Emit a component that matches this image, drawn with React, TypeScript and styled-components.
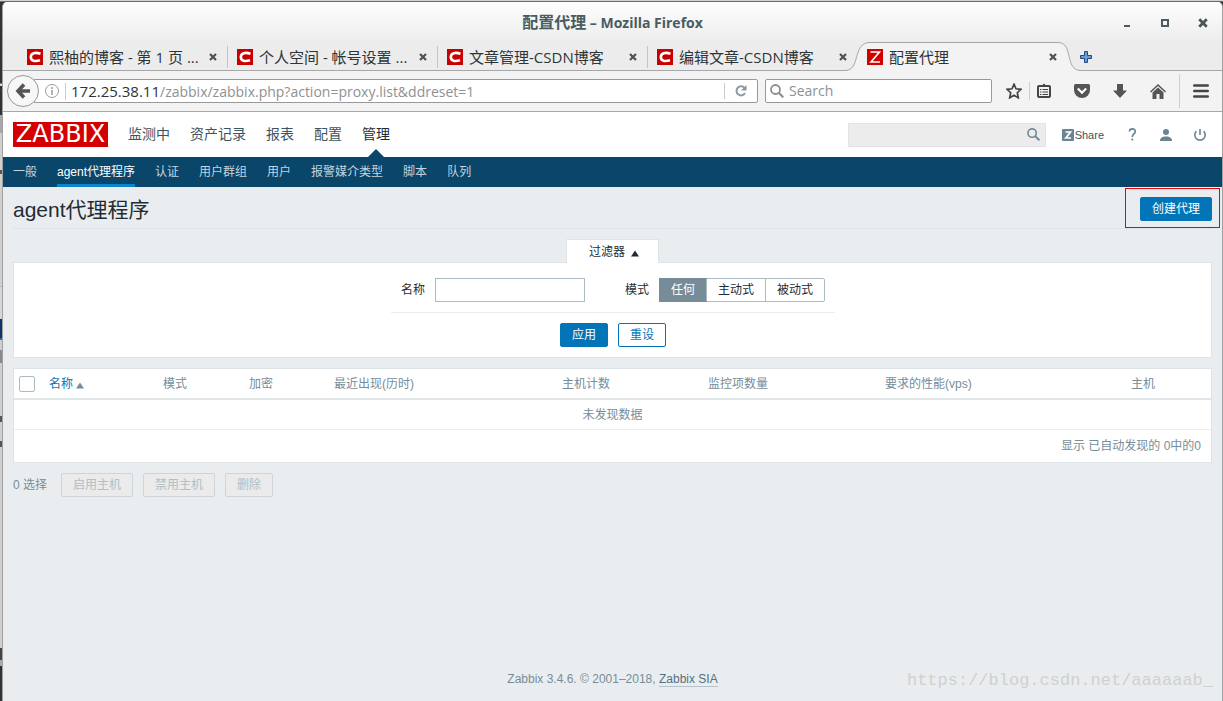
import React from "react";
import styled, { createGlobalStyle, css } from "styled-components";

const uiFont = '"Open Sans", "Noto Sans CJK SC", sans-serif';
const pageFont = '"Liberation Sans", "Noto Sans CJK SC", sans-serif';

const GlobalStyle = createGlobalStyle`
  *, *::before, *::after { box-sizing: border-box; }
  body { margin: 0; font-family: ${pageFont}; font-size: 12px; line-height: 18px; color: #1f2c33; }
  button, input { font: inherit; margin: 0; }
  button { padding: 0; border: 0; background: none; color: inherit; cursor: pointer; }
  a { color: inherit; text-decoration: none; }
  svg { display: block; flex: none; }
`;

/* Desktop and browser window */

const Desktop = styled.div`
  min-height: 100vh;
  display: flex;
  padding: 2px 0 0 2px;
  background: linear-gradient(#d4d4cf 0 1px, #6e706c 1px 2px, #2f3436 2px 83px, #d07030 83px 84px, #e0d8d0 84px 86px,
    #2f3436 86px 115px, #a8a8a8 115px 133px, #d0d0d0 133px 170px, #555 170px 174px, #d0d0d0 174px 286px,
    #bcbcbc 286px 287px, #d6d6d6 287px 319px, #12336a 319px 338px, #2a70b8 338px 340px, #d0d0d0 340px 350px,
    #8a8a8a 350px 363px, #d0d0d0 363px 416px, #555 416px 422px, #d0d0d0 422px 441px, #555 441px 447px,
    #d0d0d0 447px 648px, #444 648px 660px, #aaa 660px 666px, #303234 666px);
`;

const Window = styled.div`
  flex: 1;
  min-width: 0;
  display: flex;
  flex-direction: column;
  border: 1px solid #a0a0a0;
  border-top-color: #fbfbfb;
  border-bottom: 0;
  border-radius: 5px 5px 0 0;
  overflow: hidden;
  background: #e9edf0;
`;

const Chrome = styled.header`
  font-family: ${uiFont};
  background: linear-gradient(#fdfdfd, #ececec 40px, #ececec);
  color: #2e3436;
`;

const TitleBar = styled.div`
  display: grid;
  grid-template-columns: 1fr auto 1fr;
  align-items: center;
  height: 39px;
`;

const WindowTitle = styled.div`
  grid-column: 2;
  font-size: 14px;
  font-weight: 700;
  color: #4a5b61;
  span { font-size: 16px; }
`;

const WindowButtons = styled.div`
  display: flex;
  justify-content: flex-end;
  gap: 28px;
  padding-right: 14px;
  color: #4a5b61;
`;

const TabStrip = styled.div`
  display: flex;
  height: 29px;
  padding-left: 14px;
  box-shadow: inset 0 -1px #a5a7a8;
`;

const Tab = styled.div<{ $divided?: boolean }>`
  position: relative;
  display: flex;
  align-items: center;
  flex: 0 1 210px;
  min-width: 0;
  padding: 0 10px;
  font-size: 15px;
  ${(p) => p.$divided && css`
    &::after {
      content: "";
      position: absolute;
      right: -1px;
      top: 4px;
      height: 22px;
      border-right: 1px solid #c4c4c4;
    }
  `}
`;

const TabShape = styled.svg`
  position: absolute;
  left: -12px;
  top: 0;
`;

const TabTitle = styled.span`
  position: relative;
  flex: 1;
  min-width: 0;
  margin-left: 6px;
  white-space: nowrap;
  overflow: hidden;
`;

const TabIcon = styled.span`
  position: relative;
`;

const IconButton = styled.button`
  position: relative;
  display: flex;
  align-items: center;
  justify-content: center;
`;

const NewTab = styled(IconButton)`
  margin-left: 13px;
`;

const Toolbar = styled.div`
  display: flex;
  align-items: center;
  height: 41px;
  padding: 0 13px 0 4px;
  background: #f3f3f3;
  border-bottom: 1px solid #a5a7a8;
`;

const BackButton = styled(IconButton)`
  z-index: 1;
  width: 32px;
  height: 32px;
  border: 1px solid #999;
  border-radius: 50%;
  background: #f7f7f7;
`;

const UrlField = styled.div`
  position: relative;
  display: flex;
  align-items: center;
  flex: 1;
  height: 24px;
  margin-left: -5px;
  padding-left: 10px;
  border: 1px solid #999;
  border-radius: 0 2px 2px 0;
  background: #fff;
`;

const Address = styled.div`
  flex: 1;
  margin-left: 6px;
  padding-left: 5px;
  border-left: 1px solid #ccc;
  font-size: 14px;
  line-height: 16px;
  color: #8e9192;
  white-space: nowrap;
  b { font-size: 15px; font-weight: 400; color: #2e3436; }
`;

const ReloadButton = styled(IconButton)`
  width: 33px;
  height: 16px;
  border-left: 1px solid #ccc;
`;

const BrowserSearch = styled.label`
  display: flex;
  align-items: center;
  width: 227px;
  height: 24px;
  margin-left: 7px;
  padding-left: 4px;
  border: 1px solid #999;
  border-radius: 2px;
  background: #fff;
  input {
    flex: 1;
    min-width: 0;
    margin-left: 5px;
    padding: 0;
    border: 0;
    outline: 0;
    background: none;
    font-size: 14px;
    &::placeholder { color: #8e9192; opacity: 1; }
  }
`;

const ToolButtons = styled.div`
  display: flex;
  align-items: center;
  gap: 23px;
  margin-left: 14px;
`;

const StarGroup = styled.div`
  display: flex;
  align-items: center;
  gap: 7px;
`;

const Rule = styled.span<{ $tall?: boolean }>`
  width: 1px;
  height: ${(p) => (p.$tall ? 34 : 18)}px;
  background: #cfcfcf;
`;

const MenuGroup = styled.div`
  display: flex;
  align-items: center;
  gap: 13px;
  margin-left: -10px;
`;

/* Zabbix page */

const Page = styled.div`
  flex: 1;
  display: flex;
  flex-direction: column;
`;

const TopBar = styled.div`
  display: flex;
  align-items: center;
  height: 45px;
  padding: 0 16px 0 10px;
  background: #fff;
`;

const Logo = styled.a`
  display: flex;
  align-items: center;
  justify-content: center;
  width: 95px;
  height: 25px;
  background: #d40000;
  color: #fff;
  font: 24px/25px "DejaVu Sans", sans-serif;
`;

const MainMenu = styled.nav`
  display: flex;
  gap: 20px;
  flex: 1;
  margin-left: 20px;
  font-size: 14px;
  color: #3c5563;
`;

const MainLink = styled.a<{ $active?: boolean }>`
  position: relative;
  line-height: 45px;
  ${(p) => p.$active && css`
    color: #1f2c33;
    &::after {
      content: "";
      position: absolute;
      left: 6px;
      bottom: 0;
      border: 8px solid transparent;
      border-top: 0;
      border-bottom-color: #0a466a;
    }
  `}
`;

const SiteSearch = styled.div`
  display: flex;
  align-items: center;
  width: 198px;
  height: 24px;
  padding-right: 5px;
  border: 1px solid #e4e4e4;
  background: #ececec;
  input { flex: 1; min-width: 0; border: 0; outline: 0; background: none; }
`;

const ShareLink = styled.a`
  display: flex;
  align-items: center;
  gap: 1px;
  margin-left: 16px;
  font-size: 11px;
  color: #3c5563;
`;

const UserLinks = styled.div`
  display: flex;
  align-items: center;
  gap: 22px;
  margin-left: 23px;
  color: #6b8492;
`;

const SubMenu = styled.nav`
  display: flex;
  gap: 20px;
  height: 30px;
  padding: 0 10px;
  background: #0a466a;
  color: #c3d5df;
`;

const SubLink = styled.a<{ $active?: boolean }>`
  line-height: 30px;
  ${(p) => p.$active && css`
    color: #fff;
    box-shadow: inset 0 -3px #0f83cb;
  `}
`;

const Main = styled.main`
  flex: 1;
  padding: 0 10px;
`;

const TitleRow = styled.div`
  display: flex;
  align-items: flex-start;
  justify-content: space-between;
  height: 42px;
  border-bottom: 1px solid #dfe4e7;
`;

const Heading = styled.h1`
  margin: 0;
  font-size: 21px;
  font-weight: 400;
  line-height: 46px;
`;

const Highlight = styled.div`
  margin: 1px -8px 0 0;
  padding: 8px 7px 6px 14px;
  border: 1px solid #f00000;
`;

const Button = styled.button<{ $kind?: "outline" }>`
  height: 24px;
  padding: 0 11px;
  border: 1px solid #0275b8;
  border-radius: 2px;
  line-height: 22px;
  background: ${(p) => (p.$kind ? "#fff" : "#0275b8")};
  color: ${(p) => (p.$kind ? "#0275b8" : "#fff")};
  &:disabled { background: #ebebeb; border-color: #ccd5d9; color: #b0bec5; cursor: default; }
`;

const FilterTab = styled.button`
  position: relative;
  display: flex;
  align-items: center;
  gap: 6px;
  height: 24px;
  margin: 10px auto -1px;
  padding: 0 19px 0 22px;
  border: 1px solid #dfe4e7;
  border-bottom: 0;
  background: #fff;
  color: #1f2c33;
`;

const FilterPanel = styled.form`
  display: flex;
  flex-direction: column;
  align-items: center;
  padding: 15px 0 10px 1px;
  border: 1px solid #dfe4e7;
  background: #fff;
`;

const FilterFields = styled.div`
  display: flex;
  align-items: center;
  gap: 40px;
  padding: 0 10px 10px;
  border-bottom: 1px solid #ebeef0;
`;

const Field = styled.div`
  display: flex;
  align-items: center;
  gap: 10px;
`;

const TextBox = styled.input`
  width: 150px;
  height: 24px;
  padding: 0 4px;
  border: 1px solid #acbbc2;
  background: #fff;
`;

const Segments = styled.div`
  display: flex;
  height: 24px;
  border: 1px solid #acbbc2;
  border-radius: 2px;
`;

const Segment = styled.label`
  position: relative;
  padding: 0 11px;
  line-height: 22px;
  & + & { border-left: 1px solid #acbbc2; }
  input { position: absolute; opacity: 0; }
  &:has(input:checked) { background: #768d99; color: #fff; box-shadow: 0 0 0 1px #768d99; }
`;

const Actions = styled.div`
  display: flex;
  gap: 10px;
  margin-top: 10px;
`;

const DataTable = styled.table`
  width: 100%;
  margin-top: 10px;
  table-layout: fixed;
  border-collapse: separate;
  border-spacing: 0;
  border: 1px solid #dfe4e7;
  background: #fff;
  color: #768d99;
  th, td { padding: 0 5px; font-weight: 400; text-align: left; white-space: nowrap; }
  th { height: 31px; border-bottom: 2px solid #dfe4e7; }
  a { color: #0275b8; }
`;

const EmptyCell = styled.td`
  && { height: 30px; text-align: center; border-bottom: 1px solid #ebeef0; }
`;

const CountCell = styled.td`
  && { height: 32px; text-align: right; padding-right: 10px; }
`;

const CheckBox = styled.input`
  appearance: none;
  display: block;
  width: 16px;
  height: 16px;
  border: 1px solid #acbbc2;
  border-radius: 2px;
  background: #fff;
`;

const SortLink = styled.a`
  display: flex;
  align-items: center;
  gap: 3px;
`;

const BulkActions = styled.div`
  display: flex;
  align-items: center;
  gap: 10px;
  margin-top: 10px;
  color: #768d99;
  span { margin-right: 4px; }
`;

const Footer = styled.footer`
  position: relative;
  padding: 0 0 13px;
  text-align: center;
  color: #768d99;
  a { color: #55707e; border-bottom: 1px solid #b5c1c7; }
`;

const Watermark = styled.div`
  position: absolute;
  right: 9px;
  bottom: 8px;
  font: 17px/24px "Liberation Mono", monospace;
  color: #cfd1cf;
`;

/* Icons */

const CsdnIcon = () => (
  <svg width="16" height="16"><rect width="16" height="16" fill="#c90000" /><path d="M13.500 4.700C8 3 4 4 3.800 8c0 4 4 4.800 9.200 3.300" fill="none" stroke="#fff" strokeWidth="2.600" /></svg>
);
const ZIcon = () => (
  <svg width="16" height="16"><rect width="16" height="16" fill="#d40000" /><path d="M3.500 3H12.500L4 13H13" fill="none" stroke="#fff" strokeWidth="1.600" /></svg>
);
const CloseIcon = ({ big }: { big?: boolean }) => (
  <svg width={big ? 10 : 8} height={big ? 10 : 8} viewBox="0 0 8 8"><path d="M1 1L7 7M7 1L1 7" stroke="#4b5356" strokeWidth="2.200" /></svg>
);
const SearchIcon = ({ color, size }: { color: string; size: number }) => (
  <svg width={size} height={size} viewBox="0 0 14 14" fill="none" stroke={color}><circle cx="5.500" cy="5.500" r="4.500" strokeWidth="1.800" /><path d="M8.500 8.500L13.300 13.300" strokeWidth="2.200" /></svg>
);
const ArrowMark = styled.svg`
  margin-top: 3px;
`;
const Arrow = ({ color }: { color: string }) => (
  <ArrowMark width="8" height="7"><path d="M4 0.500L8 6.500H0Z" fill={color} /></ArrowMark>
);

const inactiveTabs = ["熙柚的博客 - 第 1 页 ...", "个人空间 - 帐号设置 ...", "文章管理-CSDN博客", "编辑文章-CSDN博客"];
const mainMenu = ["监测中", "资产记录", "报表", "配置", "管理"];
const subMenu = ["一般", "agent代理程序", "认证", "用户群组", "用户", "报警媒介类型", "脚本", "队列"];
const columns: [string, number][] = [
  ["模式", 86], ["加密", 85], ["最近出现(历时)", 228], ["主机计数", 146],
  ["监控项数量", 177], ["要求的性能(vps)", 246], ["主机", 85],
];

function BrowserChrome() {
  return (
    <Chrome>
      <TitleBar>
        <WindowTitle><span>配置代理</span> – Mozilla Firefox</WindowTitle>
        <WindowButtons>
          <IconButton aria-label="Minimize"><svg width="10" height="10"><path d="M2 8H8" stroke="currentColor" strokeWidth="2" /></svg></IconButton>
          <IconButton aria-label="Maximize"><svg width="10" height="10"><path d="M2 2H8V8H2Z" fill="none" stroke="currentColor" strokeWidth="2" /></svg></IconButton>
          <IconButton aria-label="Close"><CloseIcon big /></IconButton>
        </WindowButtons>
      </TitleBar>
      <TabStrip>
        {inactiveTabs.map((title, i) => (
          <Tab key={title} $divided={i < 3}>
            <TabIcon><CsdnIcon /></TabIcon>
            <TabTitle>{title}</TabTitle>
            <IconButton aria-label="Close tab"><CloseIcon /></IconButton>
          </Tab>
        ))}
        <Tab>
          <TabShape width="236" height="29">
            <path d="M0 28.500C16 28.500 7 0.500 25 0.500H213C229 0.500 219 28.500 236 28.500V29H0Z" fill="#f3f3f3" />
            <path d="M0 28.500C16 28.500 7 0.500 25 0.500H213C229 0.500 219 28.500 236 28.500" fill="none" stroke="#a5a7a8" />
          </TabShape>
          <TabIcon><ZIcon /></TabIcon>
          <TabTitle>配置代理</TabTitle>
          <IconButton aria-label="Close tab"><CloseIcon /></IconButton>
        </Tab>
        <NewTab aria-label="New tab">
          <svg width="12" height="12"><path d="M4.500 0.500H7.500V4.500H11.500V7.500H7.500V11.500H4.500V7.500H0.500V4.500H4.500Z" fill="#6c9bd2" stroke="#204a87" /></svg>
        </NewTab>
      </TabStrip>
      <Toolbar>
        <BackButton aria-label="Back">
          <svg width="16" height="16" fill="none" stroke="#555" strokeWidth="3.600"><path d="M9 1.500L3 8L9 14.500M3 8H15" /></svg>
        </BackButton>
        <UrlField>
          <svg width="14" height="14" fill="none" stroke="#999"><circle cx="7" cy="7" r="6.500" /><path d="M7 6V11M7 3V5" strokeWidth="1.500" /></svg>
          <Address><b>172.25.38.11</b>/zabbix/zabbix.php?action=proxy.list&amp;ddreset=1</Address>
          <ReloadButton aria-label="Reload">
            <svg width="12" height="12" fill="none" stroke="#8d98a3" strokeWidth="2"><path d="M9.500 3A4.500 4.500 0 1 0 10 8" /><path d="M11.500 0V5.500H6Z" fill="#8d98a3" stroke="none" /></svg>
          </ReloadButton>
        </UrlField>
        <BrowserSearch>
          <SearchIcon color="#8e8e8e" size={14} />
          <input aria-label="Search the web" placeholder="Search" />
        </BrowserSearch>
        <ToolButtons>
          <StarGroup>
            <IconButton aria-label="Bookmark"><svg width="16" height="16" viewBox="0 0 16 16"><path d="M8 1.200L10 5.800L15 6.300L11.300 9.700L12.300 14.800L8 12.200L3.700 14.800L4.700 9.700L1 6.300L6 5.800Z" fill="none" stroke="#454545" strokeWidth="1.700" /></svg></IconButton>
            <Rule />
            <IconButton aria-label="Bookmarks list"><svg width="14" height="16" fill="none" stroke="#454545"><rect x="1" y="3" width="12" height="11" rx="1" strokeWidth="2" /><path d="M3 3.500V2H5.500L7 0.500L8.500 2H11V3.500Z" fill="#454545" stroke="none" /><path d="M3 6.500H4.500M5.500 6.500H11M3 9H4.500M5.500 9H11M3 11.500H4.500M5.500 11.500H11" strokeWidth="1.200" /></svg></IconButton>
          </StarGroup>
          <IconButton aria-label="Pocket"><svg width="16" height="14"><path d="M1.500 0H14.500Q16 0 16 1.500V6A8 8 0 0 1 0 6V1.500Q0 0 1.500 0Z" fill="#545454" /><path d="M3.800 4.500L8 8.700L12.200 4.500" fill="none" stroke="#fff" strokeWidth="2.200" /></svg></IconButton>
          <IconButton aria-label="Downloads"><svg width="14" height="14"><path d="M4 0H10V6.500H14L7 14L0 6.500H4Z" fill="#545454" /></svg></IconButton>
          <IconButton aria-label="Home"><svg width="16" height="15"><path d="M0.500 8L8 1L15.500 8" fill="none" stroke="#545454" strokeWidth="1.500" /><path d="M2.500 8.500L8 3.500L13.500 8.500V15H9.500V10H6.500V15H2.500Z" fill="#545454" /></svg></IconButton>
          <MenuGroup>
            <Rule $tall />
            <IconButton aria-label="Menu"><svg width="16" height="14"><path d="M1.300 1.500H14.700M1.300 7H14.700M1.300 12.500H14.700" stroke="#454545" strokeWidth="2.600" strokeLinecap="round" /></svg></IconButton>
          </MenuGroup>
        </ToolButtons>
      </Toolbar>
    </Chrome>
  );
}

export default function App() {
  return (
    <Desktop>
      <GlobalStyle />
      <Window>
        <BrowserChrome />
        <Page>
          <TopBar>
            <Logo href="#">ZABBIX</Logo>
            <MainMenu>
              {mainMenu.map((m) => <MainLink key={m} href="#" $active={m === "管理"}>{m}</MainLink>)}
            </MainMenu>
            <SiteSearch>
              <input aria-label="Search" />
              <SearchIcon color="#768d99" size={13} />
            </SiteSearch>
            <ShareLink href="#">
              <svg width="12" height="12"><rect width="12" height="12" rx="1" fill="#6b8492" /><path d="M3.500 3H8.500L3.800 9H9" fill="none" stroke="#fff" strokeWidth="1.700" /></svg>
              Share
            </ShareLink>
            <UserLinks>
              <IconButton aria-label="Help"><svg width="11" height="13"><path d="M2.500 3.500C2.500 0 8.300 0 8.300 3.500C8.300 6 5.300 6 5.300 9M5.300 10.500V12.500" fill="none" stroke="currentColor" strokeWidth="1.700" /></svg></IconButton>
              <IconButton aria-label="Profile"><svg width="12" height="12" fill="currentColor"><circle cx="6" cy="3" r="3" /><path d="M0 12V10.500C1 8 4 7.500 6 7.500S11 8 12 10.500V12Z" /></svg></IconButton>
              <IconButton aria-label="Sign out"><svg width="12" height="12" fill="none" stroke="currentColor" strokeWidth="1.600"><path d="M2.400 2.200A5.200 5.200 0 1 0 9.600 2.200M6 0V6" /></svg></IconButton>
            </UserLinks>
          </TopBar>
          <SubMenu>
            {subMenu.map((m) => <SubLink key={m} href="#" $active={m === "agent代理程序"}>{m}</SubLink>)}
          </SubMenu>
          <Main>
            <TitleRow>
              <Heading>agent代理程序</Heading>
              <Highlight><Button>创建代理</Button></Highlight>
            </TitleRow>
            <FilterTab>过滤器 <Arrow color="#1f2c33" /></FilterTab>
            <FilterPanel onSubmit={(e) => e.preventDefault()}>
              <FilterFields>
                <Field><label htmlFor="name">名称</label><TextBox id="name" /></Field>
                <Field>
                  <span id="mode">模式</span>
                  <Segments role="radiogroup" aria-labelledby="mode">
                    {["任何", "主动式", "被动式"].map((m, i) => (
                      <Segment key={m}><input type="radio" name="mode" defaultChecked={i === 0} />{m}</Segment>
                    ))}
                  </Segments>
                </Field>
              </FilterFields>
              <Actions>
                <Button type="submit">应用</Button>
                <Button type="reset" $kind="outline">重设</Button>
              </Actions>
            </FilterPanel>
            <DataTable>
              <colgroup>
                <col width={30} />
                <col width={114} />
                {columns.map(([name, width]) => <col key={name} width={width} />)}
              </colgroup>
              <thead>
                <tr>
                  <th><CheckBox type="checkbox" aria-label="Select all" /></th>
                  <th><SortLink href="#">名称<Arrow color="#768d99" /></SortLink></th>
                  {columns.map(([name]) => <th key={name}>{name}</th>)}
                </tr>
              </thead>
              <tbody>
                <tr><EmptyCell colSpan={9}>未发现数据</EmptyCell></tr>
                <tr><CountCell colSpan={9}>显示 已自动发现的 0中的0</CountCell></tr>
              </tbody>
            </DataTable>
            <BulkActions>
              <span>0 选择</span>
              <Button disabled>启用主机</Button>
              <Button disabled>禁用主机</Button>
              <Button disabled>删除</Button>
            </BulkActions>
          </Main>
          <Footer>
            Zabbix 3.4.6. © 2001–2018, <a href="#">Zabbix SIA</a>
            <Watermark>https://blog.csdn.net/aaaaaab_</Watermark>
          </Footer>
        </Page>
      </Window>
    </Desktop>
  );
}
